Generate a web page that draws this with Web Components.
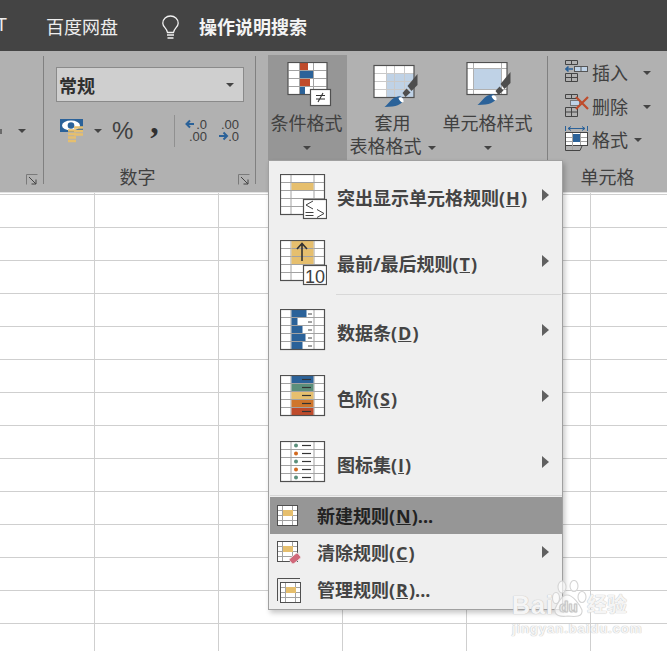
<!DOCTYPE html>
<html lang="zh-CN">
<head>
<meta charset="utf-8">
<title>条件格式</title>
<style>
  html, body { margin: 0; padding: 0; }
  body {
    position: relative;
    width: 667px;
    height: 651px;
    overflow: hidden;
    display: flex;
    flex-direction: column;
    font-family: "Open Sans", "Noto Sans CJK SC", sans-serif;
    font-size: 18px;
    color: #404040;
    background: #fff;
  }
  xl-sheet { flex: 1; }
</style>
</head>
<body>
  <xl-titlebar>
    <span slot="cut">T</span>
    <span slot="tab">百度网盘</span>
    <span slot="search">操作说明搜索</span>
  </xl-titlebar>

  <xl-ribbon>
    <xl-group style="width:43px" launcher launcher-right="5">
      <xl-clipped-row></xl-clipped-row>
    </xl-group>
    <xl-sep></xl-sep>
    <xl-group style="width:211px" label="数字" label-shift="24" launcher launcher-right="5">
      <xl-number-tools></xl-number-tools>
    </xl-group>
    <xl-sep></xl-sep>
    <xl-group style="width:291px" inset="12">
      <xl-bigbutton icon="cond" width="79" shift="2" active>条件格式<br><xl-caret></xl-caret></xl-bigbutton>
      <xl-bigbutton icon="table" width="91" shift="0">套用<br>表格格式<xl-caret style="margin-left:6px"></xl-caret></xl-bigbutton>
      <xl-bigbutton icon="cellstyle" width="97" shift="-2">单元格样式<br><xl-caret></xl-caret></xl-bigbutton>
    </xl-group>
    <xl-sep></xl-sep>
    <xl-group style="width:119px" label="单元格" column inset="17">
      <xl-cellbutton icon="insert" gap="15">插入</xl-cellbutton>
      <xl-cellbutton icon="delete" gap="15">删除</xl-cellbutton>
      <xl-cellbutton icon="format" gap="6">格式</xl-cellbutton>
    </xl-group>
  </xl-ribbon>

  <xl-sheet></xl-sheet>

  <cf-menu>
    <cf-item icon="highlight" arrow>突出显示单元格规则(<u>H</u>)</cf-item>
    <cf-item icon="topten" arrow>最前/最后规则(<u>T</u>)</cf-item>
    <cf-sep slot="sep1"></cf-sep>
    <cf-item slot="mid" icon="databar" arrow>数据条(<u>D</u>)</cf-item>
    <cf-item slot="mid" icon="scale" arrow>色阶(<u>S</u>)</cf-item>
    <cf-item slot="mid" icon="iconset" arrow>图标集(<u>I</u>)</cf-item>
    <cf-item slot="low" icon="newrule" small active>新建规则(<u>N</u>)...</cf-item>
    <cf-item slot="low" icon="clearrule" small arrow>清除规则(<u>C</u>)</cf-item>
    <cf-item slot="low" icon="managerule" small>管理规则(<u>R</u>)...</cf-item>
  </cf-menu>

  <xl-watermark></xl-watermark>

<script>
// Excel 的条件格式菜单。图标都在 ICONS 里,用 <xl-icon name> 取用。
(function () {
  const DARK = '#505050';
  const LINE = '#a2a2a2';
  const BLUE = '#2b6299';
  const GOLD = '#e6bf6e';
  const GREEN = '#5b8f7b';
  const ORANGE = '#cf762c';
  const RED = '#bf4b2b';

  function lines(list, color, width) {
    return list.map(([x1, y1, x2, y2]) =>
      `<line x1="${x1}" y1="${y1}" x2="${x2}" y2="${y2}" stroke="${color}" stroke-width="${width || 1}"/>`).join('');
  }

  // 大号菜单图标的表格:45x41,5 行 3 列
  function bigTable(content) {
    const inner = lines([
      [11, 1, 11, 40], [34, 1, 34, 40],
      [1, 8.5, 44, 8.5], [1, 16.5, 44, 16.5], [1, 24.5, 44, 24.5], [1, 32.5, 44, 32.5],
    ], LINE);
    return `<rect x="0.5" y="0.5" width="44" height="40" fill="#fff"/>${inner}${content || ''}
      <rect x="0.5" y="0.5" width="44" height="40" fill="none" stroke="${DARK}" stroke-width="1.2"/>`;
  }

  function badge(x, y, w, h, content) {
    return `<rect x="${x}" y="${y}" width="${w}" height="${h}" fill="#fff" stroke="${DARK}" stroke-width="1.2"/>${content}`;
  }

  // 小号菜单图标的表格
  function smallTable(x, y) {
    const inner = lines([
      [x + 5.5, y, x + 5.5, y + 20], [x + 15.5, y, x + 15.5, y + 20],
      [x, y + 5.5, x + 20, y + 5.5], [x, y + 10.5, x + 20, y + 10.5], [x, y + 15.5, x + 20, y + 15.5],
    ], LINE);
    return `<rect x="${x + .5}" y="${y + .5}" width="20" height="20" fill="#fff"/>${inner}
      <rect x="${x + 6}" y="${y + 5}" width="10" height="6" fill="${GOLD}"/>
      <rect x="${x + .5}" y="${y + .5}" width="20" height="20" fill="none" stroke="${DARK}"/>`;
  }

  function brush(x, y) {
    return `<g transform="translate(${x} ${y})">
      <path d="M23 12 L33 0 L33 11 L27 17 Z" fill="#4e4e4e"/>
      <path d="M18 19 L22 14.5 L26 18.5 L21 23 Z" fill="#4e4e4e"/>
      <path d="M12 23 C15 21 19 23 19 27 C16 30 13 33 0 33 C4 30 7 24 12 23 Z" fill="${BLUE}"/>
      <path d="M14 24 C16 22 20 24 19 28 C17 29 15 27 14 24 Z" fill="#fff"/>
    </g>`;
  }

  function styleTable(x, y, content) {
    return `<rect x="${x + .5}" y="${y + .5}" width="40" height="32" fill="#fff"/>${content}
      <rect x="${x + .5}" y="${y + .5}" width="40" height="32" fill="none" stroke="${DARK}" stroke-width="1.2"/>`;
  }

  function dashes(x1, x2) {
    return lines([4.5, 12.5, 20.5, 28.5, 36.5].map(y => [x1, y, x2, y]), '#333', 1.2);
  }

  const ICONS = {
    highlight: { w: 47, h: 46, svg: bigTable(`<rect x="11.5" y="9" width="22" height="7" fill="${GOLD}"/>`) +
      badge(23.5, 25.5, 23, 19, `<path d="M33 27 L26 31 L33 35 M37 35.5 L44 39.5 L37 43.5 M25.5 38.5 H33.5 M25.5 41.5 H33.5" fill="none" stroke="#404040"/>`) },
    topten: { w: 47, h: 46, svg: bigTable(`<rect x="11.5" y="1" width="22" height="23" fill="${GOLD}"/>` +
        lines([[12, 8.5, 33, 8.5], [12, 16.5, 33, 16.5]], LINE)) +
      `<path d="M22 21 V3.5 M17 9 L22 3.5 L27 9" fill="none" stroke="#333" stroke-width="1.6"/>` +
      badge(23.5, 25.5, 23, 19, `<text x="35" y="42.5" font-size="18" font-weight="400" text-anchor="middle" fill="#404040">10</text>`) },
    databar: { w: 47, h: 46, svg: bigTable([[1, 15], [9, 6], [17, 11], [25, 14], [33, 11]].map(([y, w]) =>
        `<rect x="11.5" y="${y}" width="${w}" height="7" fill="${BLUE}"/>`).join('') +
      lines([5, 13, 21, 29, 37].map(y => [28, y, 32, y]), '#444')) },
    scale: { w: 47, h: 46, svg: bigTable([BLUE, GREEN, GOLD, ORANGE, RED].map((c, i) =>
        `<rect x="11.5" y="${1 + i * 8}" width="22" height="7" fill="${c}"/>`).join('') + dashes(22, 31)) },
    iconset: { w: 47, h: 46, svg: bigTable([GREEN, '#d2691e', GREEN, '#d2691e', GREEN].map((c, i) =>
        `<circle cx="16" cy="${4.5 + i * 8}" r="2" fill="${c}"/>`).join('') + dashes(22, 31)) },
    newrule: { w: 24, h: 24, svg: smallTable(0, 1) },
    clearrule: { w: 26, h: 26, svg: smallTable(0, 1) +
      `<rect x="12.5" y="15.25" width="11" height="6.5" rx="1.5" fill="#d0687a" stroke="#efefef" stroke-width=".8" transform="rotate(-40 18 18.5)"/>` },
    managerule: { w: 26, h: 26, svg: `<path d="M.5 24 V1.5 H23" fill="none" stroke="${DARK}"/>` + smallTable(3, 5) },

    cond: { w: 50, h: 50, svg: `<g transform="translate(4.5 0)">
        <rect x=".5" y=".5" width="39" height="32" fill="#fff"/>
        <rect x="12.5" y="1" width="8" height="7" fill="${RED}"/>
        <rect x="12.5" y="9" width="13" height="7" fill="${BLUE}"/>
        <rect x="12.5" y="17" width="10" height="7" fill="${RED}"/>
        <rect x="12.5" y="25" width="5" height="7" fill="${BLUE}"/>
        ${lines([[12, 1, 12, 32], [26, 1, 26, 32], [1, 8.5, 39, 8.5], [1, 16.5, 39, 16.5], [1, 24.5, 39, 24.5]], LINE)}
        <rect x=".5" y=".5" width="39" height="32" fill="none" stroke="${DARK}" stroke-width="1.2"/>
      </g>` + badge(27.5, 27.5, 20, 16, `<path d="M33 33.5 H42 M33 37 H42 M40 31 L35 40" stroke="#333" stroke-width="1.1" fill="none"/>`) },
    table: { w: 50, h: 50, svg: `<g transform="translate(1 0)">${styleTable(4.5, 3,
        `<rect x="17" y="11" width="28" height="24" fill="#bfd2e6"/>` +
        lines([[17.5, 4, 17.5, 35], [25.5, 4, 25.5, 35], [35.5, 4, 35.5, 35], [5, 11.5, 45, 11.5], [5, 19.5, 45, 19.5], [5, 27.5, 45, 27.5]], '#c9c9c9'))}${brush(15.5, 12)}</g>` },
    cellstyle: { w: 50, h: 50, svg: `<g transform="translate(1 0)">${styleTable(3.5, 0,
        `<rect x="11" y="7" width="27" height="20" fill="#bfd2e6"/>` +
        lines([[10.5, 1, 10.5, 32], [38.5, 1, 38.5, 32], [4, 6.5, 44, 6.5], [4, 27.5, 44, 27.5]], '#b0b0b0'))}${brush(14.5, 10)}</g>` },

    money: { w: 24, h: 24, svg: `<rect x="0" y="0" width="23" height="13" fill="${BLUE}"/>
      <ellipse cx="11" cy="6.5" rx="9" ry="5" fill="#fff"/><circle cx="11" cy="6.5" r="3.3" fill="${BLUE}"/>
      <path d="M8 11.5 H16 M8 15 H16 M8 18.5 H16 M8 22 H16 M14 8.5 H23 M14 12 H23 M14 15.5 H23" stroke="${GOLD}" stroke-width="2.4"/>` },
    decinc: { w: 23, h: 24, svg: `<path d="M9 5 H1.5 M5 1.5 L1.5 5 L5 8.5" fill="none" stroke="${BLUE}" stroke-width="2"/>
      <text x="22" y="10" font-size="13" font-weight="400" text-anchor="end" fill="#404040">.0</text>
      <text x="22" y="22" font-size="13" font-weight="400" text-anchor="end" fill="#404040">.00</text>` },
    decdec: { w: 23, h: 24, svg: `<text x="22" y="10" font-size="13" font-weight="400" text-anchor="end" fill="#404040">.00</text>
      <path d="M2 17 H10 M6.5 13.5 L10 17 L6.5 20.5" fill="none" stroke="${BLUE}" stroke-width="2"/>
      <text x="22" y="22" font-size="13" font-weight="400" text-anchor="end" fill="#404040">.0</text>` },

    insert: { w: 24, h: 24, svg: `<g fill="none" stroke="#444">
        <path d="M.5 .5 H12.5 V4.5 H.5 Z M6.5 .5 V4.5"/>
        <path d="M.5 13.5 H12.5 V21.5 H.5 Z M6.5 13.5 V21.5 M.5 17.5 H12.5"/>
      </g>
      <rect x="9.5" y="6.5" width="13" height="5" fill="#bfd2e6" stroke="#555"/><path d="M16 6.5 V11.5" stroke="#555"/>
      <path d="M8 9 H1 M3.5 6.5 L1 9 L3.5 11.5" fill="none" stroke="${BLUE}" stroke-width="1.6"/>` },
    delete: { w: 25, h: 24, svg: `<g fill="none" stroke="#444">
        <path d="M.5 .5 H12.5 V4.5 H.5 Z M6.5 .5 V4.5"/>
        <path d="M.5 13.5 H12.5 V22.5 H.5 Z M6.5 13.5 V22.5 M.5 18 H12.5"/>
      </g>
      <rect x="5.5" y="6.5" width="9" height="5" fill="#bfd2e6" stroke="#777"/>
      <path d="M11 3 L23 15 M23 3 L11 15" stroke="${RED}" stroke-width="2.2"/>` },
    format: { w: 24, h: 26, svg: `<path d="M.5 0 V5 M22.5 0 V5 M3 2.5 H20 M6 .5 L3 2.5 L6 4.5 M17 .5 L20 2.5 L17 4.5" fill="none" stroke="${BLUE}"/>
      <rect x=".5" y="6.5" width="22" height="13" fill="#fff" stroke="#444"/>
      ${lines([[7.5, 7, 7.5, 24], [15.5, 7, 15.5, 19], [1, 11.5, 22, 11.5], [1, 15.5, 22, 15.5]], LINE)}
      <rect x="8" y="8" width="7" height="8" fill="${BLUE}"/>
      <path d="M.5 19.5 V24.5 H15 L17 20" fill="none" stroke="#444"/>` },
    launcher: { w: 12, h: 11, svg: `<path d="M.5 10.5 V.5 H11.5" fill="none" stroke="#7a7a7a"/>
      <path d="M3 3 L10 10 M10 5.5 V10 H5.5" fill="none" stroke="#444"/>` },
    bulb: { w: 18, h: 26, svg: `<path d="M5.5 17.5 C5 13 .8 12 .8 8.2 C.8 3.8 4.4 1 8.5 1 C12.6 1 16.2 3.8 16.2 8.2 C16.2 12 12 13 11.5 17.5 Z" fill="none" stroke="#f2f2f2" stroke-width="1.3"/>
      <path d="M5 20 H12 M5.5 23 H11.5" stroke="#f2f2f2" stroke-width="1.6"/>` },
    paw: { w: 36, h: 38, svg: `<g fill="#fff" fill-opacity=".65" stroke="#d4d4d4" stroke-width="1.1">
        <ellipse cx="10" cy="7" rx="4" ry="6"/><ellipse cx="22" cy="6" rx="4" ry="5.5"/>
        <ellipse cx="4" cy="18" rx="3.5" ry="5.5"/><ellipse cx="30" cy="17" rx="4" ry="5.5"/>
        <path d="M15 15 C21 15 28 25 30 30 C31 37 23 37 16 36 C9 37 2 36 3 29 C5 24 10 15 15 15 Z"/>
      </g>
      <text x="16.5" y="32" font-size="15" font-weight="700" text-anchor="middle" fill="#fff" stroke="#c4c4c4" stroke-width=".5">du</text>` },
  };

  class XlIcon extends HTMLElement {
    connectedCallback() {
      const icon = ICONS[this.getAttribute('name')];
      this.attachShadow({ mode: 'open' }).innerHTML = `
        <style>:host { display: block; flex: none; line-height: 0; } svg { display: block; font-family: "Liberation Sans", sans-serif; }</style>
        <svg width="${icon.w}" height="${icon.h}" viewBox="0 0 ${icon.w} ${icon.h}">${icon.svg}</svg>`;
    }
  }

  class XlTitlebar extends HTMLElement {
    connectedCallback() {
      this.attachShadow({ mode: 'open' }).innerHTML = `
        <style>
          :host {
            display: flex; align-items: center; flex: none;
            height: 51px; overflow: hidden;
            background: #444; color: #eee; font-size: 18px;
          }
          .cut { margin-left: -4px; width: 50px; flex: none; font-family: "Liberation Sans", sans-serif; }
          .tab { width: 116px; flex: none; }
          .search { margin-left: 19px; font-weight: 700; color: #f4f4f4; }
          xl-icon { margin-top: 4px; }
        </style>
        <span class="cut"><slot name="cut"></slot></span>
        <span class="tab"><slot name="tab"></slot></span>
        <xl-icon name="bulb"></xl-icon>
        <span class="search"><slot name="search"></slot></span>`;
    }
  }

  class XlRibbon extends HTMLElement {
    connectedCallback() {
      this.attachShadow({ mode: 'open' }).innerHTML = `
        <style>
          :host {
            display: flex; flex: none; box-sizing: border-box;
            height: 141px; padding-top: 4px;
            background: #b1b1b1; overflow: hidden;
          }
        </style>
        <slot></slot>`;
    }
  }

  class XlSep extends HTMLElement {
    connectedCallback() {
      this.attachShadow({ mode: 'open' }).innerHTML = `
        <style>:host { display: block; flex: none; width: 1px; height: 128px; margin-top: 1px; background: #808080; }</style>`;
    }
  }

  class XlGroup extends HTMLElement {
    connectedCallback() {
      const label = this.getAttribute('label') || '';
      const right = this.getAttribute('launcher-right') || 5;
      const inset = this.getAttribute('inset') || 0;
      const shift = this.getAttribute('label-shift') || 0;
      const dir = this.hasAttribute('column') ? 'column' : 'row';
      const launcher = this.hasAttribute('launcher')
        ? `<xl-icon name="launcher" style="justify-self:end;margin:11px ${right}px 0 0"></xl-icon>` : '';
      this.attachShadow({ mode: 'open' }).innerHTML = `
        <style>
          :host { display: flex; flex-direction: column; flex: none; height: 137px; }
          .body { display: flex; flex-direction: ${dir}; height: 108px; padding-left: ${inset}px; box-sizing: border-box; }
          .foot { display: grid; grid-template-columns: 1fr auto 1fr; height: 29px; }
          .label { grid-column: 2; margin-right: ${shift}px; line-height: 29px; font-size: 18px; color: #404040; }
          xl-icon { grid-column: 3; }
        </style>
        <div class="body"><slot></slot></div>
        <div class="foot"><span class="label">${label}</span>${launcher}</div>`;
    }
  }

  class XlCaret extends HTMLElement {
    connectedCallback() {
      this.attachShadow({ mode: 'open' }).innerHTML = `
        <style>
          :host {
            display: inline-block; width: 0; height: 0; vertical-align: middle;
            border-left: 4px solid transparent; border-right: 4px solid transparent;
            border-top: 4px solid #444;
          }
        </style>`;
    }
  }

  class XlBigbutton extends HTMLElement {
    connectedCallback() {
      const active = this.hasAttribute('active');
      const shift = Number(this.getAttribute('shift') || 0);
      this.attachShadow({ mode: 'open' }).innerHTML = `
        <style>
          :host {
            display: flex; flex-direction: column; align-items: center; flex: none;
            box-sizing: border-box; width: ${this.getAttribute('width')}px; height: 105px;
            padding-top: 7px; background: ${active ? '#969696' : 'transparent'};
          }
          .text { margin-right: ${shift}px; line-height: 23px; text-align: center; white-space: nowrap; color: #404040; font-size: 18px; }
        </style>
        <xl-icon name="${this.getAttribute('icon')}"></xl-icon>
        <div class="text"><slot></slot></div>`;
    }
  }

  class XlCellbutton extends HTMLElement {
    connectedCallback() {
      this.attachShadow({ mode: 'open' }).innerHTML = `
        <style>
          :host { display: flex; align-items: center; height: 33.5px; margin-top: 1.5px; margin-bottom: -1.5px; }
          xl-icon { width: 27px; margin-bottom: 2px; }
          xl-caret { margin-left: ${this.getAttribute('gap')}px; }
          span { line-height: 1; font-size: 18px; color: #404040; }
        </style>
        <xl-icon name="${this.getAttribute('icon')}"></xl-icon>
        <span><slot></slot></span>
        <xl-caret></xl-caret>`;
    }
  }

  class XlClippedRow extends HTMLElement {
    connectedCallback() {
      this.attachShadow({ mode: 'open' }).innerHTML = `
        <style>
          :host { display: flex; align-items: center; height: 32px; margin-top: 60px; }
          i { width: 2px; height: 5px; background: #6a6a6a; }
          xl-caret { margin-left: 16px; }
        </style>
        <i></i><xl-caret></xl-caret>`;
    }
  }

  class XlNumberTools extends HTMLElement {
    connectedCallback() {
      this.attachShadow({ mode: 'open' }).innerHTML = `
        <style>
          :host { display: block; padding: 12px 0 0 12px; }
          .combo {
            display: flex; align-items: center; justify-content: space-between;
            box-sizing: border-box; width: 188px; height: 35px; padding: 0 9px 0 2px;
            background: #cfcfcf; border: 1px solid #8a8a8a;
            font-weight: 700; font-size: 18px; color: #303030;
          }
          .row { display: flex; align-items: center; height: 32px; margin-top: 13px; padding-left: 4px; }
          .pct { flex: none; margin-left: 10px; font: 400 24px/1 "Liberation Sans", sans-serif; color: #404040; }
          .comma { flex: none; margin-left: 17px; width: 10px; font: 700 34px/1 "Liberation Serif", serif; color: #303030; margin-top: -18px; }
          .rule { flex: none; width: 1px; height: 32px; margin-left: 14px; background: #909090; }
          .rule + xl-icon { margin-left: 10px; }
          .last { margin-left: 9px; }
        </style>
        <div class="combo">常规<xl-caret></xl-caret></div>
        <div class="row">
          <xl-icon name="money"></xl-icon>
          <xl-caret style="margin-left:10px"></xl-caret>
          <span class="pct">%</span>
          <span class="comma">,</span>
          <span class="rule"></span>
          <xl-icon name="decinc"></xl-icon>
          <xl-icon class="last" name="decdec"></xl-icon>
        </div>`;
    }
  }

  class XlSheet extends HTMLElement {
    connectedCallback() {
      this.attachShadow({ mode: 'open' }).innerHTML = `
        <style>
          :host {
            display: block;
            border-top: 1px solid #e2e2e2;
            background-color: #fff;
            background-image:
              linear-gradient(to right, #cfcfcf 1px, transparent 1px),
              linear-gradient(to bottom, #cfcfcf 1px, transparent 1px);
            background-size: 124px 33px;
            background-position: 94px 1px;
          }
        </style>`;
    }
  }

  class CfMenu extends HTMLElement {
    connectedCallback() {
      this.attachShadow({ mode: 'open' }).innerHTML = `
        <style>
          :host {
            position: absolute; left: 268px; top: 160px; z-index: 2;
            display: flex; flex-direction: column;
            box-sizing: border-box; width: 295px; height: 450px; padding: 1px 0 1px 1px;
            background: #efefef; border: 1px solid #a0a0a0;
            box-shadow: 2px 3px 5px rgba(0, 0, 0, .22);
          }
          .mid { padding-top: 2px; }
          .rule { height: 1px; margin-bottom: 1px; background: #d8d8d8; }
          ::slotted(cf-item) { flex: none; }
        </style>
        <slot></slot>
        <slot name="sep1"></slot>
        <div class="mid"><slot name="mid"></slot></div>
        <div class="rule"></div>
        <slot name="low"></slot>`;
    }
  }

  class CfSep extends HTMLElement {
    connectedCallback() {
      this.attachShadow({ mode: 'open' }).innerHTML = `
        <style>:host { display: block; height: 1px; margin-left: 66px; margin-right: 1px; background: #d8d8d8; }</style>`;
    }
  }

  class CfItem extends HTMLElement {
    connectedCallback() {
      const small = this.hasAttribute('small');
      const active = this.hasAttribute('active');
      const arrow = this.hasAttribute('arrow') ? '<span class="arrow"></span>' : '';
      this.attachShadow({ mode: 'open' }).innerHTML = `
        <style>
          :host {
            display: flex; align-items: center; box-sizing: border-box;
            height: ${small ? 37 : 66}px;
            padding: 0 13px 0 ${small ? 7 : 10}px;
            background: ${active ? '#969696' : 'transparent'};
            color: ${active ? '#222' : '#444'};
            font-weight: 700; font-size: 18px; white-space: nowrap;
          }
          xl-icon { width: ${small ? 40 : 57}px; margin-top: ${small ? 0 : 4}px; }
          .text { flex: 1; padding-top: ${small ? 2 : 7}px; line-height: 1.2; }
          .text ::slotted(u) { padding: 0 1px; }
          .arrow {
            flex: none; width: 0; height: 0; margin-top: -1px;
            border-top: 6px solid transparent; border-bottom: 6px solid transparent;
            border-left: 7px solid #606060;
          }
        </style>
        <xl-icon name="${this.getAttribute('icon')}"></xl-icon>
        <span class="text"><slot></slot></span>${arrow}`;
    }
  }

  // 百度经验水印,压在菜单右下角之上
  class XlWatermark extends HTMLElement {
    connectedCallback() {
      this.attachShadow({ mode: 'open' }).innerHTML = `
        <style>
          :host {
            position: absolute; left: 512px; top: 578px; z-index: 3;
            width: 120px; height: 62px; display: block;
            font-family: "Liberation Sans", "Noto Sans CJK SC", sans-serif;
            color: rgba(255, 255, 255, .85);
            text-shadow: 0 0 1px #c4c4c4, 0 0 1px #c4c4c4;
          }
          .top { display: flex; align-items: flex-end; height: 40px; }
          .bai { flex: none; width: 40px; font: 700 25px/26px "Liberation Sans", sans-serif; letter-spacing: 1px; }
          xl-icon { flex: none; width: 35px; }
          .cn { font-size: 20px; line-height: 26px; font-weight: 700; white-space: nowrap; }
          .url { font-size: 13.5px; line-height: 18px; margin-top: 2px; letter-spacing: .7px; font-weight: 700; white-space: nowrap; }
        </style>
        <div class="top"><span class="bai">Bai</span><xl-icon name="paw"></xl-icon><span class="cn">经验</span></div>
        <div class="url">jingyan.baidu.com</div>`;
    }
  }

  customElements.define('xl-icon', XlIcon);
  customElements.define('xl-titlebar', XlTitlebar);
  customElements.define('xl-ribbon', XlRibbon);
  customElements.define('xl-sep', XlSep);
  customElements.define('xl-group', XlGroup);
  customElements.define('xl-caret', XlCaret);
  customElements.define('xl-bigbutton', XlBigbutton);
  customElements.define('xl-cellbutton', XlCellbutton);
  customElements.define('xl-clipped-row', XlClippedRow);
  customElements.define('xl-number-tools', XlNumberTools);
  customElements.define('xl-sheet', XlSheet);
  customElements.define('cf-menu', CfMenu);
  customElements.define('cf-sep', CfSep);
  customElements.define('cf-item', CfItem);
  customElements.define('xl-watermark', XlWatermark);
})();
</script>
</body>
</html>
